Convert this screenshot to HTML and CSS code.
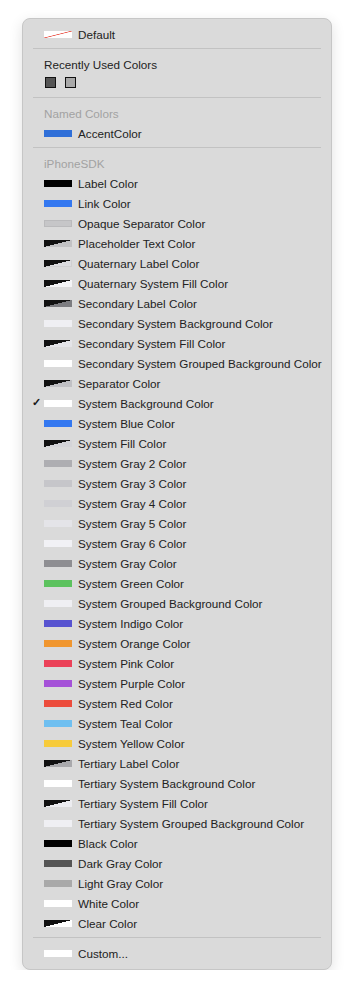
FILE: index.html
```html
<!DOCTYPE html>
<html lang='en'>

<head>
    <meta charset='UTF-8'>
    <meta name='viewport' content='width=device-width, initial-scale=1.0'>
    <title>Color Menu</title>
    <link rel="stylesheet" href="styles.css">
</head>

<body>
    <div class='menu'>
        <div class='row'><span class='swatch default'></span>Default</div>
        <div class='sep'></div>

        <div class='row'><span class='title'>Recently Used Colors</span></div>
        <div class='recent'>
            <span class='chip' style='background:#555555'></span>
            <span class='chip' style='background:#a9a9a9'></span>
        </div>
        <div class='sep'></div>

        <div class='row heading'>Named Colors</div>
        <div class='row'><span class='swatch' style='background:#2f6fd8'></span>AccentColor</div>
        <div class='sep'></div>

        <div class='row heading gap'>iPhoneSDK</div>
        <div class='row'><span class='swatch' style='background:#000'></span>Label Color</div>
        <div class='row'><span class='swatch' style='background:#3478f0'></span>Link Color</div>
        <div class='row'><span class='swatch light' style='background:#c6c6c8'></span>Opaque Separator Color</div>
        <div class='row'><span class='swatch tri' style='--c:#c2c2c4'></span>Placeholder Text Color</div>
        <div class='row'><span class='swatch tri light' style='--c:#dcdcdf'></span>Quaternary Label Color</div>
        <div class='row'><span class='swatch tri' style='--c:#f4f4f6'></span>Quaternary System Fill Color</div>
        <div class='row'><span class='swatch tri' style='--c:#7c7c80'></span>Secondary Label Color</div>
        <div class='row'><span class='swatch' style='background:#efeff3'></span>Secondary System Background Color</div>
        <div class='row'><span class='swatch tri' style='--c:#e4e4e8'></span>Secondary System Fill Color</div>
        <div class='row'><span class='swatch' style='background:#fff'></span>Secondary System Grouped Background Color</div>
        <div class='row'><span class='swatch tri' style='--c:#c0c0c4'></span>Separator Color</div>
        <div class='row'><span class='check'>&#10003;</span><span class='swatch' style='background:#fff'></span>System Background Color</div>
        <div class='row'><span class='swatch' style='background:#3478f0'></span>System Blue Color</div>
        <div class='row'><span class='swatch tri' style='--c:#d4d4d8'></span>System Fill Color</div>
        <div class='row'><span class='swatch' style='background:#aeaeb2'></span>System Gray 2 Color</div>
        <div class='row'><span class='swatch' style='background:#c6c6ca'></span>System Gray 3 Color</div>
        <div class='row'><span class='swatch' style='background:#d0d0d4'></span>System Gray 4 Color</div>
        <div class='row'><span class='swatch' style='background:#e4e4e8'></span>System Gray 5 Color</div>
        <div class='row'><span class='swatch' style='background:#f1f1f5'></span>System Gray 6 Color</div>
        <div class='row'><span class='swatch' style='background:#8e8e92'></span>System Gray Color</div>
        <div class='row'><span class='swatch' style='background:#5cc25e'></span>System Green Color</div>
        <div class='row'><span class='swatch' style='background:#efeff3'></span>System Grouped Background Color</div>
        <div class='row'><span class='swatch' style='background:#5753d0'></span>System Indigo Color</div>
        <div class='row'><span class='swatch' style='background:#f0962f'></span>System Orange Color</div>
        <div class='row'><span class='swatch' style='background:#eb4158'></span>System Pink Color</div>
        <div class='row'><span class='swatch' style='background:#a552d8'></span>System Purple Color</div>
        <div class='row'><span class='swatch' style='background:#ec4c3c'></span>System Red Color</div>
        <div class='row'><span class='swatch' style='background:#6fbff0'></span>System Teal Color</div>
        <div class='row'><span class='swatch' style='background:#f7cb3b'></span>System Yellow Color</div>
        <div class='row'><span class='swatch tri' style='--c:#a9a9ac'></span>Tertiary Label Color</div>
        <div class='row'><span class='swatch' style='background:#fff'></span>Tertiary System Background Color</div>
        <div class='row'><span class='swatch tri' style='--c:#ececf0'></span>Tertiary System Fill Color</div>
        <div class='row'><span class='swatch' style='background:#efeff3'></span>Tertiary System Grouped Background Color</div>
        <div class='row'><span class='swatch' style='background:#000'></span>Black Color</div>
        <div class='row'><span class='swatch' style='background:#555555'></span>Dark Gray Color</div>
        <div class='row'><span class='swatch' style='background:#a9a9a9'></span>Light Gray Color</div>
        <div class='row'><span class='swatch' style='background:#fff'></span>White Color</div>
        <div class='row'><span class='swatch tri' style='--c:#fff'></span>Clear Color</div>
        <div class='sep'></div>

        <div class='row gap2'><span class='swatch' style='background:#fff'></span>Custom...</div>
    </div>
</body>

</html>
```

FILE: styles.css
```css
body {
    font-family: "Liberation Sans", Arial, sans-serif;
    margin: 0;
    padding: 18px 0 0 22px;
    background-color: #fff;
    color: #222;
}

.menu {
    width: 308px;
    padding: 5px 0 6px 0;
    background-color: #dadada;
    border: 1px solid #c6c6c6;
    border-radius: 8px;
    box-shadow: 0 4px 14px rgba(0, 0, 0, 0.12);
}

.row {
    position: relative;
    display: flex;
    align-items: center;
    height: 20px;
    padding-left: 21px;
    font-size: 11.7px;
    white-space: nowrap;
}

.row.gap {
    margin-top: 1px;
}

.row.gap2 {
    margin-top: 2px;
}

.heading {
    color: #a2a2a2;
}

.sep {
    height: 1px;
    margin: 4px 10px 5px 10px;
    background-color: #c2c2c2;
}

.swatch {
    display: inline-block;
    width: 28px;
    height: 7px;
    margin-right: 6px;
    flex: none;
}

.swatch.light {
    box-shadow: inset 0 0 0 1px rgba(0, 0, 0, 0.06);
}

.swatch.tri {
    background: linear-gradient(to bottom right, #111 50%, var(--c) 50%);
}

.swatch.default {
    background: linear-gradient(to bottom right, #fff calc(50% - 0.7px), #e8483c 50%, #fff calc(50% + 0.7px));
}

.check {
    position: absolute;
    left: 9px;
    top: 3px;
    font-size: 11px;
    font-weight: bold;
    color: #1a1a1a;
}

.recent {
    display: flex;
    gap: 9px;
    padding: 3px 0 5px 22px;
}

.chip {
    width: 9px;
    height: 9px;
    border: 1.5px solid #111;
}
```
